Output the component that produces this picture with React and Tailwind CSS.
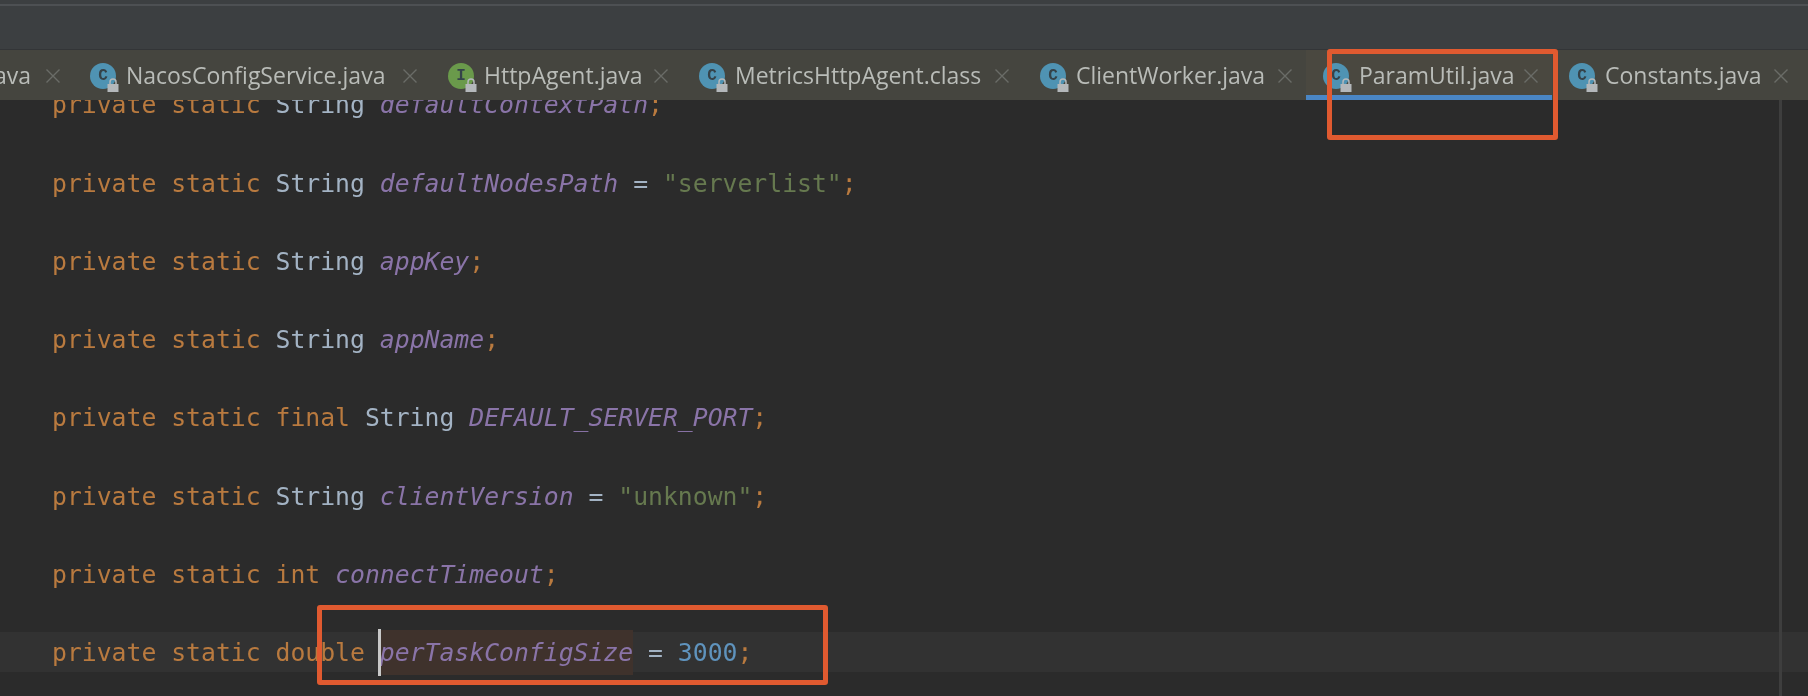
const tabs = [
  { name: 'NacosConfigService.java', kind: 'C', width: 'w-[358px]' },
  { name: 'HttpAgent.java', kind: 'I', width: 'w-[251px]' },
  { name: 'MetricsHttpAgent.class', kind: 'C', width: 'w-[341px]' },
  { name: 'ClientWorker.java', kind: 'C', width: 'w-[283px]' },
  { name: 'ParamUtil.java', kind: 'C', width: 'w-[246px]', active: true },
  { name: 'Constants.java', kind: 'C', width: 'w-[250px]' },
];

const CloseIcon = () => (
  <svg width="16" height="16" viewBox="0 0 16 16" className="shrink-0" fill="none" stroke="#6a6c67" strokeWidth="1.4">
    <path d="M1.5 1.5l13 13M14.5 1.5l-13 13" />
  </svg>
);

const FileIcon = ({ kind }) => (
  <div className="relative shrink-0 w-[26px] h-[26px]">
    <div
      className={`w-[26px] h-[26px] rounded-full flex items-center justify-center text-[16px] text-[#35434a] font-['Liberation_Mono',monospace] font-bold ${
        kind === 'I' ? 'bg-[#6a9a4b]' : 'bg-[#4f93b3]'
      }`}
    >
      {kind}
    </div>
    <svg width="12" height="14" viewBox="0 0 12 14" className="absolute -right-[3px] -bottom-[3px]">
      <path d="M3 6V4a3 3 0 0 1 6 0V6" fill="none" stroke="#b4b8bb" strokeWidth="1.5" />
      <rect x="0.5" y="6" width="11" height="8" fill="#b4b8bb" />
    </svg>
  </div>
);

const Tab = ({ tab }) => (
  <div className={`relative shrink-0 h-full flex items-center pt-[1px] pl-[17px] pr-[13px] ${tab.width} ${tab.active ? 'bg-[#4a4840]' : ''}`}>
    <FileIcon kind={tab.kind} />
    <span className="ml-[10px] text-[#b9bcb8] text-[23px] leading-none whitespace-nowrap">{tab.name}</span>
    <div className="ml-auto">
      <CloseIcon />
    </div>
    {tab.active && <div className="absolute left-0 right-0 bottom-0 h-[5px] bg-[#4a86c5]" />}
  </div>
);

const K = ({ children }) => <span className="text-[#b97a3f]">{children}</span>;
const T = ({ children }) => <span className="text-[#a3b3c4]">{children}</span>;
const F = ({ children }) => <span className="italic text-[#8a74a8]">{children}</span>;
const S = ({ children }) => <span className="text-[#66794f]">{children}</span>;

const Line = ({ current, children }) => (
  <div className="h-[78.3px] flex items-center">
    <div className={`w-full h-10 flex items-center pt-[3px] pl-[52px] whitespace-pre ${current ? 'bg-[#323232]' : ''}`}>
      <div>{children}</div>
    </div>
  </div>
);

export default function App() {
  return (
    <div className="relative w-[1808px] h-[696px] overflow-hidden bg-[#2b2b2b] blur-[0.6px] font-['Open_Sans',sans-serif]">
      {/* top toolbar */}
      <div className="h-[50px] bg-[#3c3f41] pt-[4px] border-b border-[#333537]">
        <div className="h-[2px] bg-[#4d5053]" />
      </div>

      {/* editor tabs */}
      <div className="relative z-10 h-[50px] bg-[#45453f] flex items-center overflow-hidden">
        <div className="shrink-0 w-[73px] h-full flex items-center justify-end pt-[1px] pr-[12px]">
          <span className="text-[#b9bcb8] text-[23px] leading-none mr-[14px]">ava</span>
          <CloseIcon />
        </div>
        {tabs.map((tab) => (
          <Tab key={tab.name} tab={tab} />
        ))}
      </div>

      {/* code */}
      <div className="-mt-[35px] font-['DejaVu_Sans_Mono',monospace] text-[24.75px] leading-none">
        <Line><K>private static </K><T>String </T><F>defaultContextPath</F><K>;</K></Line>
        <Line><K>private static </K><T>String </T><F>defaultNodesPath</F><T> = </T><S>"serverlist"</S><K>;</K></Line>
        <Line><K>private static </K><T>String </T><F>appKey</F><K>;</K></Line>
        <Line><K>private static </K><T>String </T><F>appName</F><K>;</K></Line>
        <Line><K>private static final </K><T>String </T><F>DEFAULT_SERVER_PORT</F><K>;</K></Line>
        <Line><K>private static </K><T>String </T><F>clientVersion</F><T> = </T><S>"unknown"</S><K>;</K></Line>
        <Line><K>private static int </K><F>connectTimeout</F><K>;</K></Line>
        <Line current>
          <K>private static double </K>
          <span className="relative bg-[#3f322c] py-2">
            <span className="absolute -left-[2px] -top-[1px] -bottom-[1px] w-[3px] bg-[#c8c8c8]" />
            <F>perTaskConfigSize</F>
          </span>
          <T> = </T><span className="text-[#5f93bd]">3000</span><K>;</K>
        </Line>
      </div>

      {/* right margin guide */}
      <div className="absolute left-[1779px] top-[100px] bottom-0 w-[3px] bg-[#3e3e3e]" />

      {/* red annotation boxes */}
      <div className="absolute z-20 left-[1327px] top-[49px] w-[231px] h-[91px] border-[5px] border-[#e05a30] rounded-[3px]" />
      <div className="absolute z-20 left-[317px] top-[605px] w-[511px] h-[80px] border-[5px] border-[#e05a30] rounded-[3px]" />
    </div>
  );
}
